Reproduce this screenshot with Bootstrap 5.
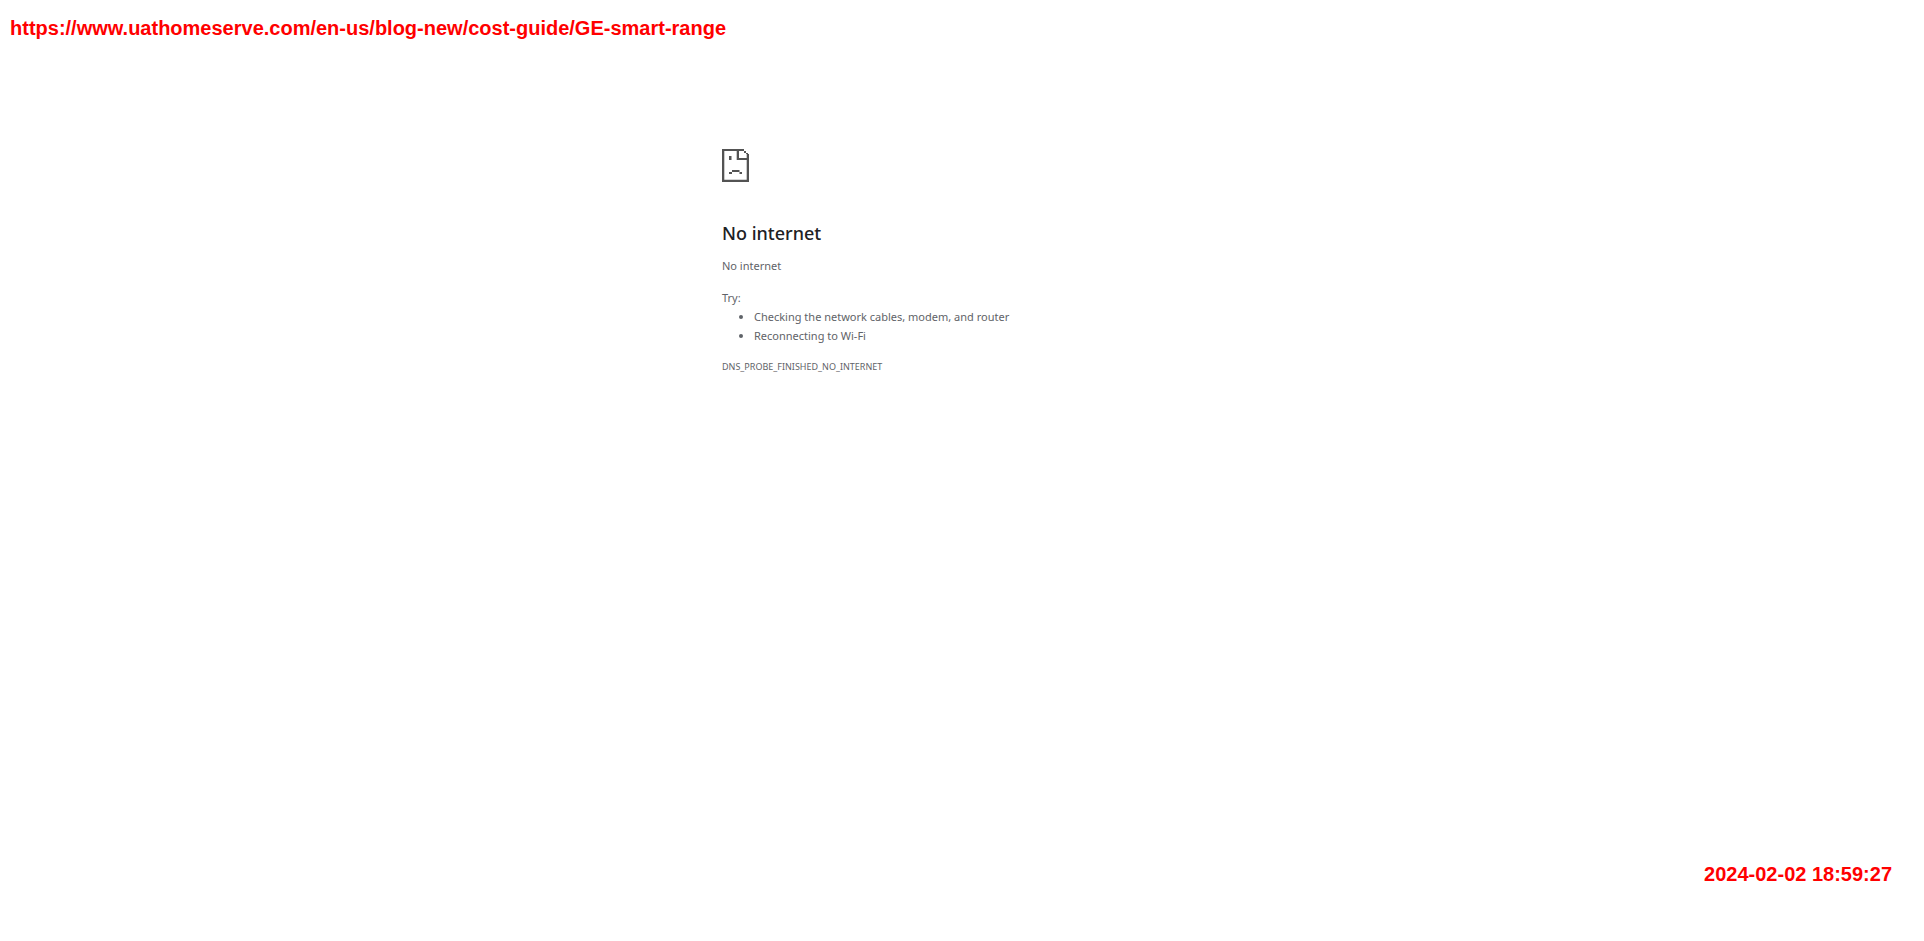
<!DOCTYPE html>
<html lang="en">
<head>
<meta charset="utf-8">
<meta name="viewport" content="width=device-width, initial-scale=1">
<title>No internet</title>
<link href="https://cdn.jsdelivr.net/npm/bootstrap@5.3.0/dist/css/bootstrap.min.css" rel="stylesheet">
<style>
  body { font-family: "Noto Sans", "Open Sans", sans-serif; font-size: 11px; line-height: 19px; color: #5f6368; background: #fff; }
  .stamp { font: bold 20px/24px "Liberation Sans", Arial, sans-serif; color: #f00; overflow-wrap: anywhere; }
  .page-top { padding: 16px 10px 0; }
  .page-bottom { padding: 0 32px 55px; }
  .error-box { max-width: 480px; margin-top: 109px; }
  .error-icon { width: 27px; height: 33px; margin-bottom: 36px; }
  .error-title { font-size: 18px; line-height: 30px; font-weight: 500; color: #202124; margin-bottom: 8px; }
  .error-summary { margin-bottom: 13px; }
  .tips { padding-left: 32px; margin-bottom: 12px; }
  .error-code { font-size: 9px; }
</style>
</head>
<body class="d-flex flex-column min-vh-100">
<header class="stamp page-top">https://www.uathomeserve.com/en-us/blog-new/cost-guide/GE-smart-range</header>
<main class="error-box w-100 mx-auto">
  <svg class="error-icon d-block" viewBox="0 0 27 33" role="img" aria-label="Sad page">
    <g fill="#535353">
      <path d="M0 0h22v2H2.3v28.7h22.4V5H27v28H0z"/>
      <path d="M14.7 2H17v7h8v2H14.7z"/>
      <path d="M22 2h2v2h-2zM24 4h2v1h-2zM7 7h2.5v4H7zM10 21h7.5v2H10zM7 23h3v2H7zM17.5 23H20v2h-2.5z"/>
    </g>
  </svg>
  <h1 class="error-title">No internet</h1>
  <p class="error-summary">No internet</p>
  <p class="mb-0">Try:</p>
  <ul class="tips">
    <li>Checking the network cables, modem, and router</li>
    <li>Reconnecting to Wi-Fi</li>
  </ul>
  <div class="error-code">DNS_PROBE_FINISHED_NO_INTERNET</div>
</main>
<footer class="stamp page-bottom mt-auto text-end"><time datetime="2024-02-02T18:59:27">2024-02-02 18:59:27</time></footer>
<script src="https://cdn.jsdelivr.net/npm/bootstrap@5.3.0/dist/js/bootstrap.bundle.min.js"></script>
</body>
</html>
